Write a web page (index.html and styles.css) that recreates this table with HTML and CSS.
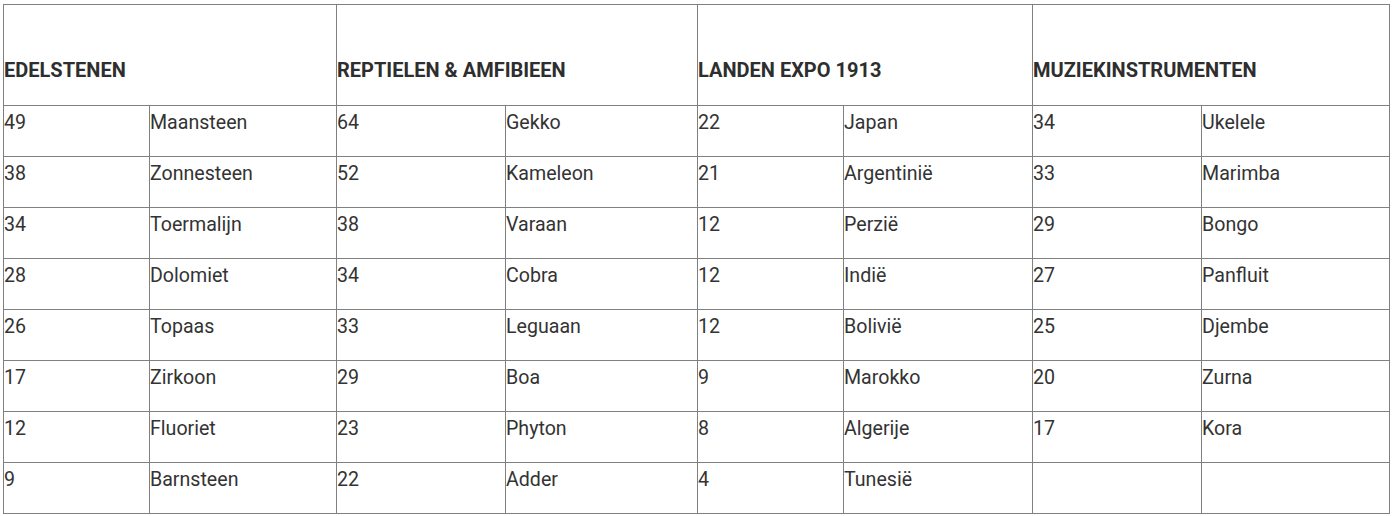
FILE: index.html
```html
<!DOCTYPE html>
<html lang="nl">
<head>
<meta charset="utf-8">
<title>Tabel</title>
<link rel="stylesheet" href="styles.css">
</head>
<body>
<div class="wrap">
<table class="grid">
<colgroup>
<col class="c1"><col class="c2"><col class="c3"><col class="c4"><col class="c5"><col class="c6"><col class="c7"><col class="c8">
</colgroup>
<thead>
<tr class="head">
<th colspan="2">EDELSTENEN</th>
<th colspan="2">REPTIELEN &amp; AMFIBIEEN</th>
<th colspan="2">LANDEN EXPO 1913</th>
<th colspan="2">MUZIEKINSTRUMENTEN</th>
</tr>
</thead>
<tbody>
<tr><td>49</td><td>Maansteen</td><td>64</td><td>Gekko</td><td>22</td><td>Japan</td><td>34</td><td>Ukelele</td></tr>
<tr><td>38</td><td>Zonnesteen</td><td>52</td><td>Kameleon</td><td>21</td><td>Argentinië</td><td>33</td><td>Marimba</td></tr>
<tr><td>34</td><td>Toermalijn</td><td>38</td><td>Varaan</td><td>12</td><td>Perzië</td><td>29</td><td>Bongo</td></tr>
<tr><td>28</td><td>Dolomiet</td><td>34</td><td>Cobra</td><td>12</td><td>Indië</td><td>27</td><td>Panfluit</td></tr>
<tr><td>26</td><td>Topaas</td><td>33</td><td>Leguaan</td><td>12</td><td>Bolivië</td><td>25</td><td>Djembe</td></tr>
<tr><td>17</td><td>Zirkoon</td><td>29</td><td>Boa</td><td>9</td><td>Marokko</td><td>20</td><td>Zurna</td></tr>
<tr><td>12</td><td>Fluoriet</td><td>23</td><td>Phyton</td><td>8</td><td>Algerije</td><td>17</td><td>Kora</td></tr>
<tr><td>9</td><td>Barnsteen</td><td>22</td><td>Adder</td><td>4</td><td>Tunesië</td><td></td><td></td></tr>
</tbody>
</table>
</div>
</body>
</html>
```

FILE: styles.css
```css
html, body {
  margin: 0;
  padding: 0;
  background: #ffffff;
}

.wrap {
  padding: 4px 0 0 3px;
}

.grid {
  border-collapse: collapse;
  table-layout: fixed;
  width: 1386px;
  font-family: Roboto, "Liberation Sans", sans-serif;
  color: #333333;
}

.c1 { width: 146px; }
.c2 { width: 187px; }
.c3 { width: 169px; }
.c4 { width: 192px; }
.c5 { width: 146px; }
.c6 { width: 189px; }
.c7 { width: 169px; }
.c8 { width: 188px; }

.grid th,
.grid td {
  border: 1px solid #808080;
  text-align: left;
  padding: 0;
}

.head th {
  height: 79px;
  padding: 0 0 21px 0;
  vertical-align: bottom;
  font-size: 20px;
  font-weight: 700;
  line-height: 27px;
  color: #2e2e2e;
}

.grid td {
  height: 48px;
  padding: 2px 0 0 0;
  vertical-align: top;
  font-size: 19.6px;
  line-height: 30px;
  font-weight: 400;
}
```
